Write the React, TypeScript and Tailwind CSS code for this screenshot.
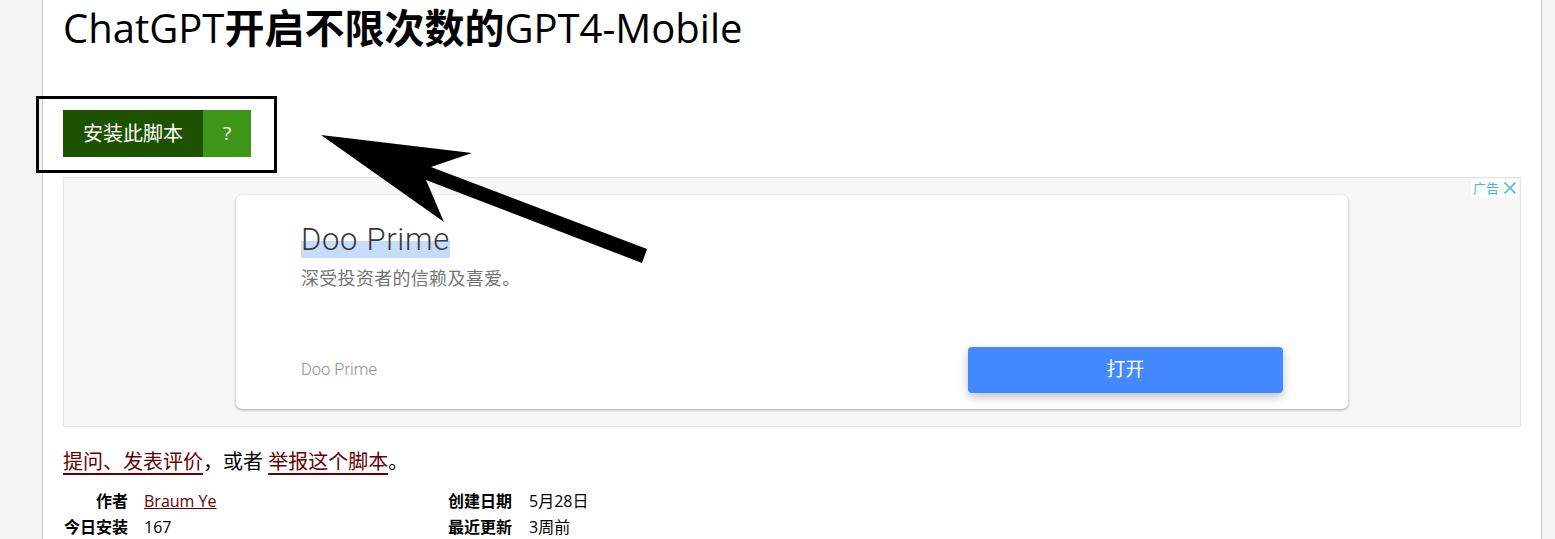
export default function App() {
  return (
    <div className="min-h-[539px] bg-[#f3f3f3] font-['Open_Sans','Noto_Sans_CJK_SC',sans-serif] text-black">
      <div className="relative ml-[42px] min-h-[539px] w-[1500px] border-x border-[#c9c9c9] bg-white px-5">
        <h2 className="pt-[3px] text-[40px] leading-[50px]">
          <span className="font-normal">ChatGPT</span>
          <span className="font-bold">开启不限次数的</span>
          <span className="font-normal">GPT4-Mobile</span>
        </h2>

        <div className="relative mt-[57px] flex w-fit">
          <div className="absolute -left-[27px] -top-[14px] h-[77px] w-[241px] border-[3px] border-black" />
          <a className="flex h-[47px] w-[140px] items-center justify-center bg-[#1e5200] text-[20px] text-white">
            安装此脚本
          </a>
          <a className="flex h-[47px] w-[48px] items-center justify-center bg-[#3e9619] text-[19px] text-white">
            ?
          </a>
        </div>

        <div className="relative mt-5 flex h-[250px] items-start justify-center border border-[#e3e3e3] bg-[#f7f7f7] pt-[17px]">
          <div className="absolute right-[1px] top-[1px] flex items-center gap-[2px] bg-white px-[2px] text-[13px] leading-[18px] text-[#4db3d4]">
            <span>广告</span>
            <svg width="14" height="14" viewBox="0 0 14 14" className="ml-[2px]">
              <path d="M1.5 1.5 L12.5 12.5 M12.5 1.5 L1.5 12.5" stroke="#4db3d4" strokeWidth="1.6" />
            </svg>
          </div>
          <div className="flex h-[214px] w-[1112px] flex-col rounded-[6px] bg-white px-[65px] shadow-[0_1px_3px_rgba(0,0,0,0.35)] font-['Roboto','Noto_Sans_CJK_SC',sans-serif]">
            <div className="mt-[27px] w-fit bg-[linear-gradient(transparent_52%,#c6dcfb_52%)] text-[31px] font-light leading-[36px] tracking-[0.7px] text-[#3a3a3a]">
              Doo Prime
            </div>
            <div className="mt-[8px] text-[18px] leading-[26px] tracking-[0.3px] text-[#757575]">
              深受投资者的信赖及喜爱。
            </div>
            <div className="mt-auto mb-[16px] flex items-center justify-between">
              <span className="text-[16.5px] font-light text-[#8e8e8e]">Doo Prime</span>
              <button className="h-[46px] w-[315px] rounded-[4px] bg-[#4489ff] text-[19px] text-white shadow-[0_4px_10px_rgba(0,0,0,0.25)]">
                打开
              </button>
            </div>
          </div>
        </div>

        <p className="mt-[20px] text-[20px] leading-[30px]">
          <a className="text-[#670000] underline decoration-[#670000] underline-offset-[4px]">提问、发表评价</a>
          ，或者{" "}
          <a className="text-[#670000] underline decoration-[#670000] underline-offset-[4px]">举报这个脚本</a>
          。
        </p>

        <div className="mt-[11px] grid grid-cols-[65px_288px_65px_1fr] gap-x-4 text-[16px] leading-[26px]">
          <span className="text-right font-bold">作者</span>
          <a className="text-[#670000] underline">Braum Ye</a>
          <span className="font-bold">创建日期</span>
          <span>5月28日</span>
          <span className="text-right font-bold">今日安装</span>
          <span>167</span>
          <span className="font-bold">最近更新</span>
          <span>3周前</span>
        </div>

        <svg className="pointer-events-none absolute left-[236px] top-[134px]" width="370" height="130" viewBox="0 0 370 130">
          <polygon points="42,1 193,19 152,33 368,115 363,129 147,46 165,88" fill="black" />
        </svg>
      </div>
    </div>
  );
}
